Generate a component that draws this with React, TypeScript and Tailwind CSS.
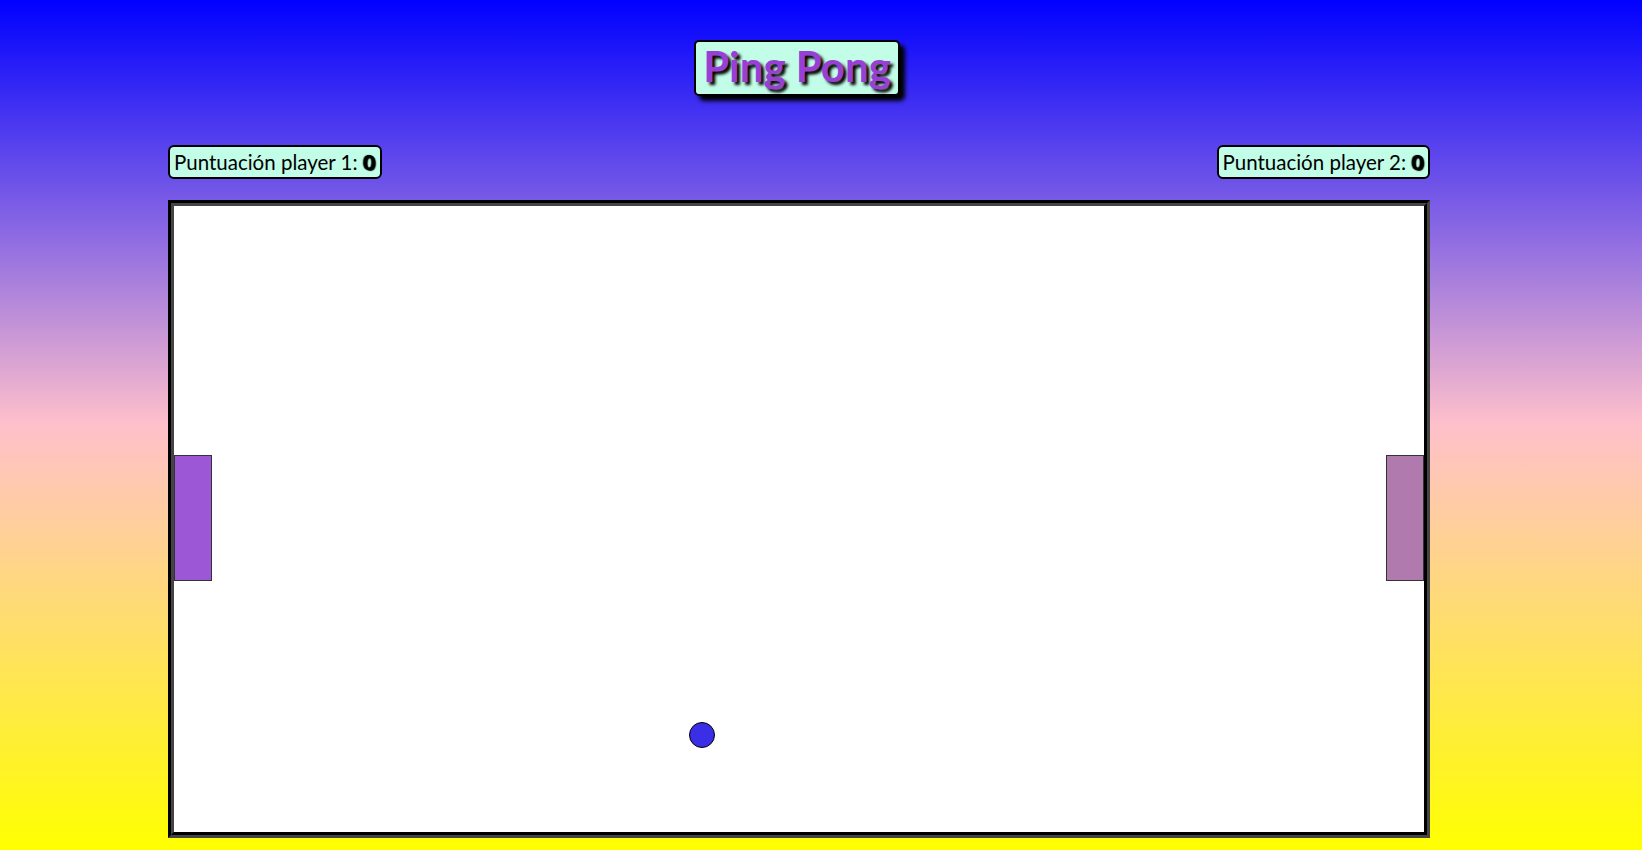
export default function App() {
  return (
    <main className="min-h-[850px] w-full bg-[linear-gradient(#0000ff,#ffc0cb,#ffff00)] font-['Lato',sans-serif] text-black">
      <div className="ml-[168px] w-[1262px] pt-[40px] pb-[11px]">
        <div className="flex justify-center">
          <h1 className="ml-[-4px] rounded-[5px] border-2 border-black bg-[#c2fde7] px-[7px] pt-[2px] pb-[5px] text-[42px] font-bold leading-[45px] text-[#9a3fd6] shadow-[5px_5px_4px_#000] [text-shadow:3px_3px_3px_#000]">
            Ping Pong
          </h1>
        </div>

        <div className="mt-[49px] flex justify-between">
          <Score label="Puntuación player 1:" value={0} />
          <Score label="Puntuación player 2:" value={0} />
        </div>

        <div className="mt-[21px] h-[638px] w-[1262px] border-[6px] border-[#444] bg-white [border-style:groove]">
          <div className="relative h-full w-full">
            <div className="absolute left-0 top-[249px] h-[126px] w-[38px] border border-[#333] bg-[#9b57d6]" />
            <div className="absolute right-0 top-[249px] h-[126px] w-[38px] border border-[#333] bg-[#b07aae]" />
            <div className="absolute left-[515px] top-[516px] h-[26px] w-[26px] rounded-full border border-black bg-[#3a2ee6]" />
          </div>
        </div>
      </div>
    </main>
  );
}

function Score({ label, value }: { label: string; value: number }) {
  return (
    <div className="flex h-[34px] items-center rounded-[6px] border-2 border-black bg-[#c2fde7] px-[4px] text-[20.5px] leading-none">
      <span>{label}</span>
      <span className="ml-[6px] font-bold [text-shadow:1px_1px_1px_#000,-1px_0_1px_#000]">{value}</span>
    </div>
  );
}
